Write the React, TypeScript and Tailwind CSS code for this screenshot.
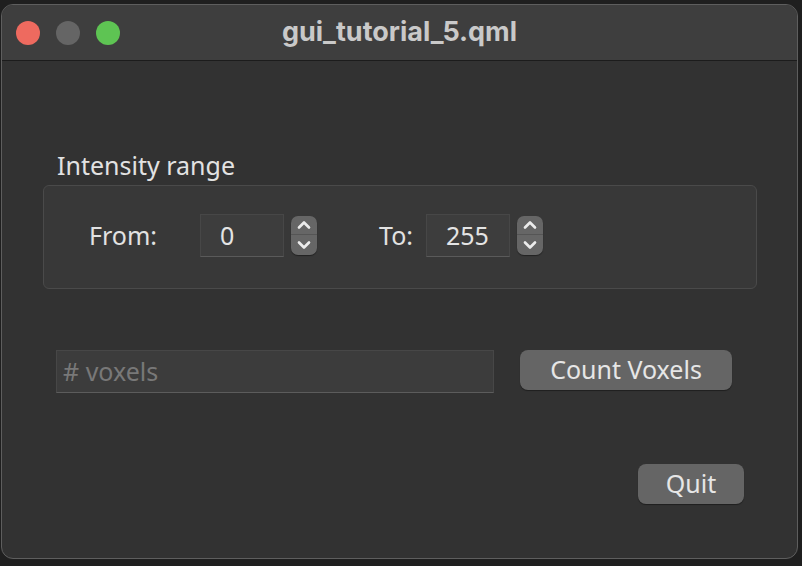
import { ChevronUp, ChevronDown } from "lucide-react";

function SpinBox({ value }: { value: string }) {
  return (
    <div className="flex items-center">
      <div className="w-[84px] h-[43px] bg-[#3d3d3d] border border-[#474747] border-b-[#5a5a5a] flex items-center pl-[19px] text-[25px] text-[#e4e4e4]">
        {value}
      </div>
      <div className="ml-[7px] w-[26px] h-[39px] rounded-[7px] bg-[#666666] flex flex-col items-center shadow-[0_1px_1px_rgba(0,0,0,0.4)]">
        <div className="h-[19px] w-full flex items-center justify-center border-b border-[#555555]">
          <ChevronUp size={20} strokeWidth={3.2} className="text-[#ececec]" />
        </div>
        <div className="h-[20px] w-full flex items-center justify-center">
          <ChevronDown size={20} strokeWidth={3.2} className="text-[#ececec]" />
        </div>
      </div>
    </div>
  );
}

function App() {
  return (
    <div
      className="w-[802px] h-[566px] bg-[#1f1f1f] pl-[1px] pt-[4px]"
      style={{ fontFamily: '"Noto Sans", "Open Sans", sans-serif' }}
    >
      <div className="w-[797px] h-[555px] rounded-[12px] bg-[#323232] border border-[#5e5e5e] overflow-hidden flex flex-col">
        {/* title bar */}
        <div className="relative h-[56px] bg-[#3e3e3e] border-b border-[#1c1c1c] flex items-center shrink-0">
          <div className="flex items-center gap-[16px] pl-[14px]">
            <span className="w-[24px] h-[24px] rounded-full bg-[#ee6a5f]" />
            <span className="w-[24px] h-[24px] rounded-full bg-[#656565]" />
            <span className="w-[24px] h-[24px] rounded-full bg-[#5ec453]" />
          </div>
          <div
            className="absolute inset-0 flex items-center justify-center text-[27px] font-bold text-[#c9c9c9]"
            style={{ fontFamily: 'Inter, "Liberation Sans", sans-serif' }}
          >
            gui_tutorial_5.qml
          </div>
        </div>

        {/* body */}
        <div className="flex flex-col pl-[41px]">
          <div className="mt-[89px] ml-[14px] text-[25px] leading-[30px] text-[#e2e2e2]">
            Intensity range
          </div>
          <div className="mt-[5px] w-[714px] h-[104px] rounded-[6px] bg-[#383838] border border-[#4a4a4a] flex items-center pl-[45px] pb-[3px]">
            <span className="text-[25px] text-[#e2e2e2] w-[111px]">From:</span>
            <SpinBox value="0" />
            <span className="ml-[62px] text-[25px] text-[#e2e2e2] w-[47px]">To:</span>
            <SpinBox value="255" />
          </div>

          <div className="mt-[61px] ml-[13px] flex items-start">
            <div className="w-[438px] h-[43px] bg-[#3c3c3c] border border-[#474747] border-b-[#5c5c5c] flex items-center pl-[6px] text-[25px] text-[#787878]">
              # voxels
            </div>
            <button className="ml-[26px] w-[212px] h-[40px] rounded-[8px] bg-[#656565] text-[25px] text-[#e6e6e6] flex items-center justify-center shadow-[0_1px_1px_rgba(0,0,0,0.4)]">
              Count Voxels
            </button>
          </div>

          <div className="mt-[71px] flex justify-end pr-[53px]">
            <button className="w-[106px] h-[40px] rounded-[8px] bg-[#656565] text-[25px] text-[#e6e6e6] flex items-center justify-center shadow-[0_1px_1px_rgba(0,0,0,0.4)]">
              Quit
            </button>
          </div>
        </div>
      </div>
    </div>
  );
}

export default App;
